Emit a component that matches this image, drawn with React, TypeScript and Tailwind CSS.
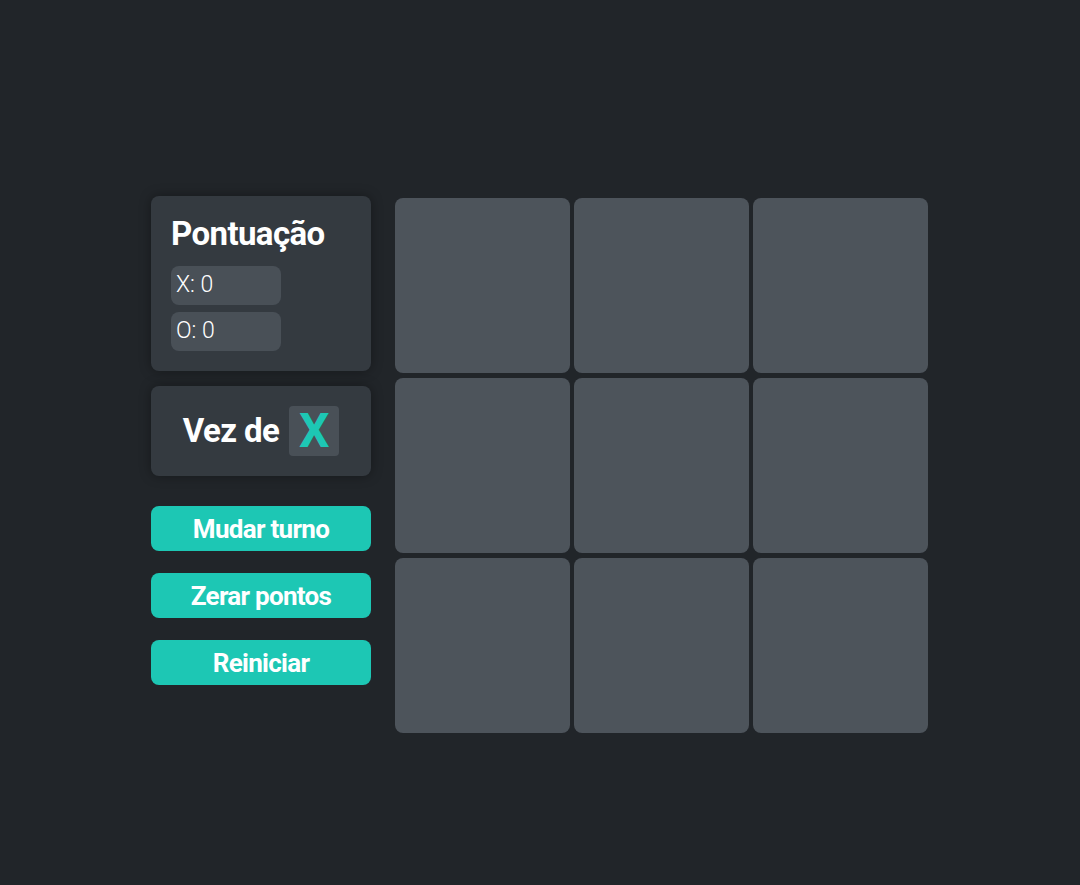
import React from "react";

// Jogo da velha: placar, vez do jogador, botões e tabuleiro 3x3.

const cells = Array.from({ length: 9 }, (_, i) => i);

function ActionButton({ label }: { label: string }) {
  return (
    <button className="h-[45px] w-full rounded-lg bg-[#1dc7b4] text-[26px] leading-none font-bold tracking-[-0.7px] text-white">
      {label}
    </button>
  );
}

export default function App() {
  return (
    <div
      className="flex min-h-[885px] w-full justify-center bg-[#212529] pt-[196px] pr-[1px]"
      style={{ fontFamily: "Roboto, 'Noto Sans', sans-serif" }}
    >
      <div className="flex items-start gap-6">
        {/* Left column */}
        <div className="flex w-[220px] flex-col">
          <div className="flex h-[175px] flex-col rounded-lg bg-[#343a40] px-5 pt-[19px] shadow-[0_0_12px_rgba(0,0,0,0.35)]">
            <h2 className="text-[33px] leading-[38px] font-bold tracking-[-0.6px] text-white">
              Pontuação
            </h2>
            <div className="mt-[13px] flex flex-col gap-[7px]">
              <div className="flex h-[39px] w-[110px] items-center rounded-lg bg-[#495057] pl-[5px] text-[23px] font-light text-white">
                X: 0
              </div>
              <div className="flex h-[39px] w-[110px] items-center rounded-lg bg-[#495057] pl-[5px] text-[23px] font-light text-white">
                O: 0
              </div>
            </div>
          </div>

          <div className="mt-[15px] flex h-[90px] items-center justify-center gap-[10px] rounded-lg bg-[#343a40] shadow-[0_0_12px_rgba(0,0,0,0.35)]">
            <span className="text-[33px] font-bold tracking-[-0.6px] text-white">Vez de</span>
            <span className="flex h-[50px] w-[50px] items-center justify-center rounded bg-[#495057] text-[48px] font-bold text-[#1dc7b4]">
              X
            </span>
          </div>

          <div className="mt-[30px] flex flex-col gap-[22px]">
            <ActionButton label="Mudar turno" />
            <ActionButton label="Zerar pontos" />
            <ActionButton label="Reiniciar" />
          </div>
        </div>

        {/* Board */}
        <div className="mt-[2px] grid grid-cols-[175px_175px_175px] gap-x-1 gap-y-[5px]">
          {cells.map((i) => (
            <div key={i} className="h-[175px] w-[175px] rounded-lg bg-[#4d545b]" />
          ))}
        </div>
      </div>
    </div>
  );
}
